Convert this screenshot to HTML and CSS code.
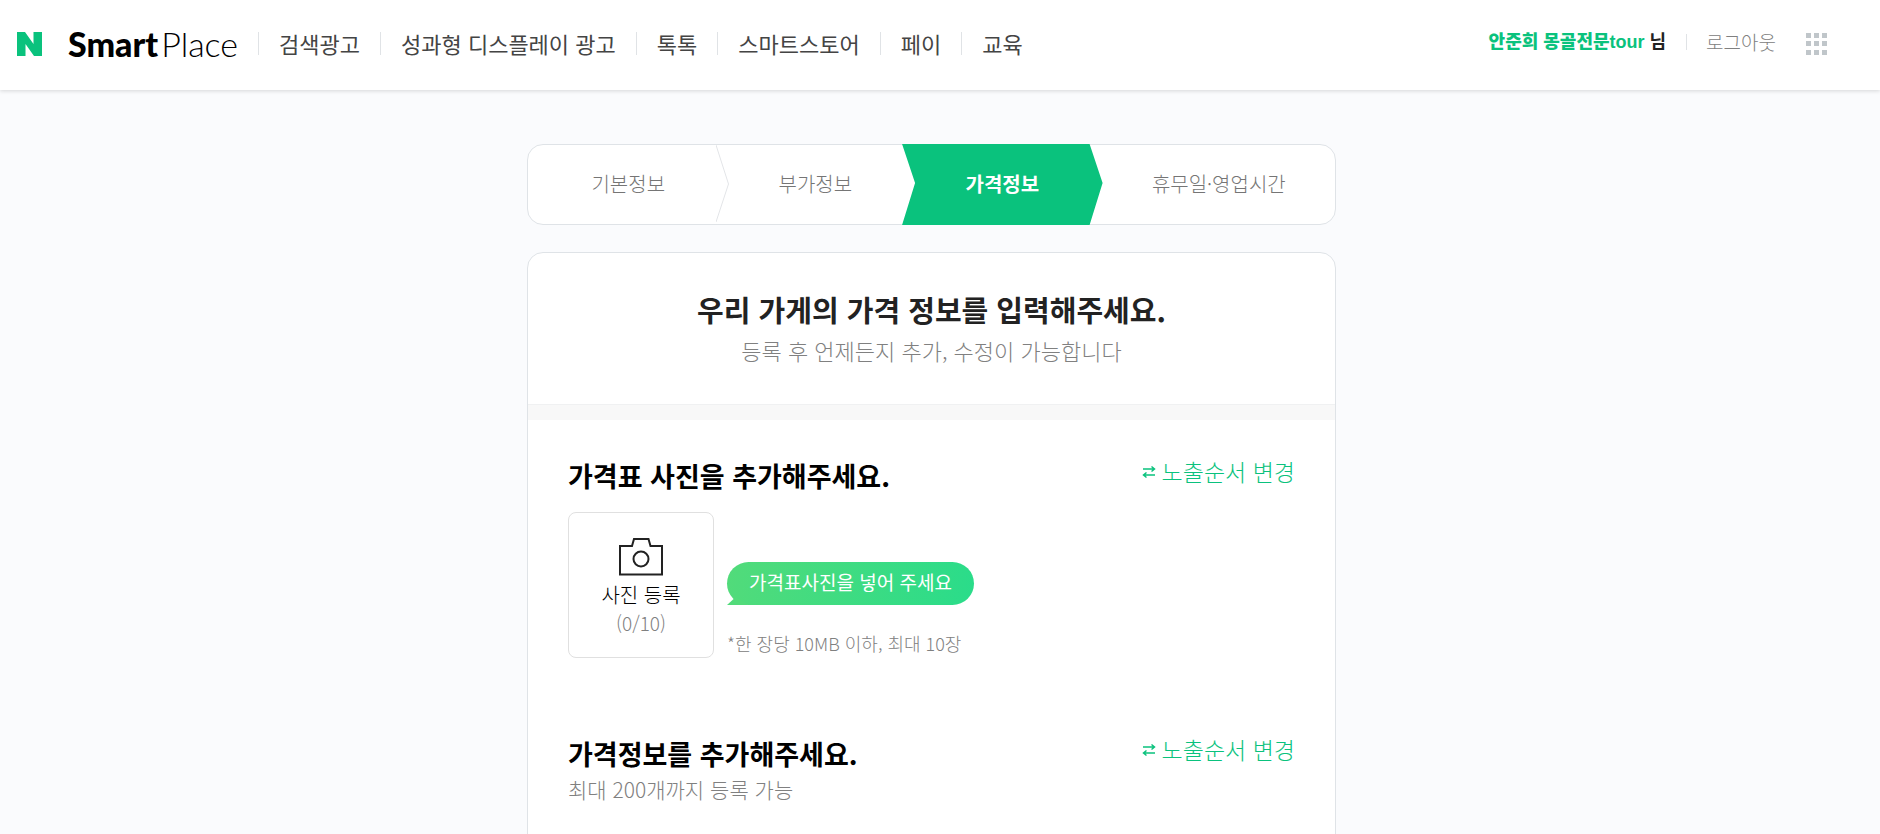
FILE: index.html
```
<!DOCTYPE html>
<html lang="ko">
<head>
  <meta charset="UTF-8" />
  <meta name="viewport" content="width=device-width, initial-scale=1.0"/>
  <title>SmartPlace - 가격정보</title>
  <link rel="stylesheet" href="styles.css">
</head>
<body>
  <header class="header">
    <a class="naver" href="#" aria-label="NAVER">
      <svg width="25" height="24" viewBox="0 0 25 24"><path d="M0 0h8l8.500 12V0H25v24h-8L8.500 12v12H0z" fill="#0ac27d"/></svg>
    </a>
    <a class="logo" href="#"><strong>Smart</strong><span>Place</span></a>

    <nav class="menu">
      <a href="#">검색광고</a>
      <a href="#">성과형 디스플레이 광고</a>
      <a href="#">톡톡</a>
      <a href="#">스마트스토어</a>
      <a href="#">페이</a>
      <a href="#">교육</a>
    </nav>

    <div class="user">
      <p class="user-name"><strong>안준희 몽골전문tour</strong> 님</p>
      <a class="logout" href="#">로그아웃</a>
      <button class="apps" type="button" aria-label="전체 서비스">
        <svg width="22" height="22" viewBox="0 0 22 22" fill="#c0c6ca">
          <path d="M0 0h5v5H0zM8 0h5v5H8zM16 0h5v5h-5zM0 8h5v5H0zM8 8h5v5H8zM16 8h5v5h-5zM0 17h5v5H0zM8 17h5v5H8zM16 17h5v5h-5z"/>
        </svg>
      </button>
    </div>
  </header>

  <main class="container">
    <ol class="steps">
      <li>기본정보</li>
      <li>
        <svg class="arrow" width="14" height="79" viewBox="0 0 14 79"><path d="M0 0L12.500 39L0 77" fill="none" stroke="#e3e5e8"/></svg>
        부가정보
      </li>
      <li class="active" aria-current="step">가격정보</li>
      <li>휴무일·영업시간</li>
    </ol>

    <div class="card">
      <div class="card-head">
        <h1>우리 가게의 가격 정보를 입력해주세요.</h1>
        <p>등록 후 언제든지 추가, 수정이 가능합니다</p>
      </div>

      <section class="section">
        <div class="section-head">
          <h2>가격표 사진을 추가해주세요.</h2>
          <button class="order" type="button">
            <svg width="14" height="16" viewBox="0 0 14 16" fill="none" stroke="currentColor" stroke-width="1.500"><path d="M1 6h11M9.500 3.500L12.500 6L9.500 8.500M13 12H2M4.500 9.500L1.500 12L4.500 14.500"/></svg>
            노출순서 변경
          </button>
        </div>
        <div class="photo">
          <button class="upload" type="button">
            <svg width="44" height="38" viewBox="0 0 44 38" fill="none" stroke="#222" stroke-width="2"><path d="M1 8h12l2-7h14.500l2 7H43v28.500H1z"/><circle cx="22" cy="21" r="7.500"/></svg>
            <span>사진 등록</span>
            <span class="count">(0/10)</span>
          </button>
          <div class="guide">
            <p class="bubble">가격표사진을 넣어 주세요</p>
            <p class="note">*한 장당 10MB 이하, 최대 10장</p>
          </div>
        </div>
      </section>

      <section class="section">
        <div class="section-head">
          <h2>가격정보를 추가해주세요.</h2>
          <button class="order" type="button">
            <svg width="14" height="16" viewBox="0 0 14 16" fill="none" stroke="currentColor" stroke-width="1.500"><path d="M1 6h11M9.500 3.500L12.500 6L9.500 8.500M13 12H2M4.500 9.500L1.500 12L4.500 14.500"/></svg>
            노출순서 변경
          </button>
        </div>
        <p class="desc">최대 200개까지 등록 가능</p>
      </section>
    </div>
  </main>
</body>
</html>
```
FILE: styles.css
```
* {
  box-sizing: border-box;
  margin: 0;
  padding: 0;
}

html {
  scrollbar-width: none;
}

body {
  background-color: #fafbfd;
  color: #222;
  font-family: "Noto Sans CJK KR", sans-serif;
  font-size: 20px;
  font-weight: 300;
}

a {
  color: inherit;
  text-decoration: none;
}

button {
  border: none;
  background: none;
  color: inherit;
  font: inherit;
  cursor: pointer;
}

svg {
  display: block;
}

/* Header */
.header {
  display: flex;
  align-items: center;
  min-height: 90px;
  padding: 0 52px 3px 17px;
  background: white;
  box-shadow: 0 1px 4px rgba(0, 0, 0, 0.15);
}

.logo {
  display: flex;
  gap: 3px;
  margin: 0 20px 0 26px;
  color: #000;
  font-family: Lato, sans-serif;
  font-size: 34px;
  line-height: 40px;
}

.logo strong {
  font-weight: 900;
}

.menu {
  display: flex;
}

.menu a {
  padding: 0 20px;
  border-left: 1px solid #e0e3e6;
  color: #444;
  font-size: 22px;
  font-weight: 400;
  line-height: 23px;
  white-space: nowrap;
}

.user {
  display: flex;
  align-items: center;
  margin-left: auto;
  padding-bottom: 3px;
  white-space: nowrap;
}

.user-name {
  font-family: "Liberation Sans", "Noto Sans CJK KR", sans-serif;
  font-size: 18px;
  font-weight: 700;
  line-height: 28px;
}

.user-name strong {
  color: #0ac27d;
}

.logout {
  margin-left: 20px;
  padding: 0 30px 0 19px;
  border-left: 1px solid #e0e3e6;
  color: #808080;
  font-size: 19px;
  line-height: 16px;
}

.apps {
  padding-top: 4px;
}

/* Content */
.container {
  max-width: 826px;
  margin: 54px auto 0;
  padding-right: 17px;
}

.steps {
  display: grid;
  grid-template-columns: 188fr 187fr 188fr 246fr;
  height: 81px;
  margin-bottom: 27px;
  border: 1px solid #dfe3e7;
  border-radius: 16px;
  background: white;
  color: #757575;
  list-style: none;
}

.steps li {
  display: flex;
  align-items: center;
  justify-content: center;
  position: relative;
  padding: 0 0 2px 13px;
}

.steps .arrow {
  position: absolute;
  top: 0;
  left: 0;
}

.steps .active {
  margin: -1px -13px -1px 0;
  padding-right: 13px;
  background: #0ac27d;
  clip-path: polygon(0 0, calc(100% - 13px) 0, 100% 48%, calc(100% - 13px) 100%, 0 100%, 13px 48%);
  color: white;
  font-weight: 700;
}

.card {
  border: 1px solid #dfe3e7;
  border-radius: 16px;
  background: white;
}

.card-head {
  padding: 36px 20px;
  border-bottom: 1px solid #f0f1f2;
  text-align: center;
}

.card-head h1 {
  font-size: 29px;
  line-height: 40px;
}

.card-head p {
  margin-top: 3px;
  color: #808080;
  font-size: 22px;
  line-height: 36px;
}

.section {
  padding: 36px 40px 40px;
}

.card-head + .section {
  border-top: 15px solid #f8f8f8;
}

.section:last-child {
  padding-bottom: 120px;
}

.section-head {
  display: flex;
  align-items: flex-start;
  justify-content: space-between;
}

.section h2 {
  color: #000;
  font-size: 27px;
  line-height: 40px;
}

.order {
  display: flex;
  align-items: center;
  gap: 6px;
  color: #0ac27d;
  font-size: 23px;
  line-height: 30px;
}

.photo {
  display: flex;
  align-items: flex-end;
  gap: 13px;
  margin-top: 16px;
}

.upload {
  display: flex;
  flex-direction: column;
  align-items: center;
  width: 146px;
  height: 146px;
  padding-top: 25px;
  border: 1px solid #e0e0e0;
  border-radius: 8px;
  color: #000;
  line-height: 28px;
}

.upload svg {
  margin-bottom: 5px;
}

.upload .count {
  color: #808080;
  font-size: 19px;
}

.bubble {
  position: relative;
  margin-bottom: 24px;
  padding: 0 22px 3px;
  border-radius: 22px;
  background: linear-gradient(100deg, #52db7a, #2adc8a);
  color: white;
  font-size: 19px;
  font-weight: 400;
  line-height: 40px;
}

/* bubble tail */
.bubble::before {
  content: "";
  position: absolute;
  left: 0;
  bottom: 0;
  width: 22px;
  height: 8px;
  background: #52db7a;
  clip-path: polygon(0 100%, 40% 0, 100% 100%);
}

.note {
  padding-bottom: 1px;
  color: #808080;
  font-size: 18px;
  line-height: 28px;
}

.desc {
  color: #808080;
  font-size: 21px;
  line-height: 30px;
}
```
